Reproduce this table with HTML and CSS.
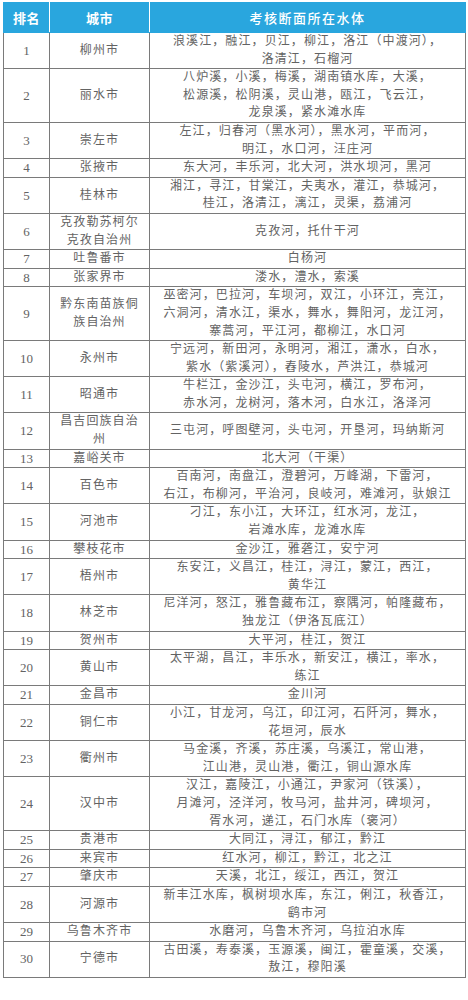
FILE: index.html
```html
<!DOCTYPE html>
<html lang="zh-CN">
<head>
<meta charset="utf-8">
<title>考核断面所在水体</title>
<link rel="stylesheet" href="styles.css">
</head>
<body>
<div class="page">
<table class="rank">
<colgroup><col class="c-rank"><col class="c-city"><col class="c-water"></colgroup>
<thead>
<tr><th>排名</th><th>城市</th><th class="wide">考核断面所在水体</th></tr>
</thead>
<tbody>
<tr><td class="n">1</td><td>柳州市</td><td>浪溪江，融江，贝江，柳江，洛江（中渡河），<br>洛清江，石榴河</td></tr>
<tr><td class="n">2</td><td>丽水市</td><td>八炉溪，小溪，梅溪，湖南镇水库，大溪，<br>松源溪，松阴溪，灵山港，瓯江，飞云江，<br>龙泉溪，紧水滩水库</td></tr>
<tr><td class="n">3</td><td>崇左市</td><td>左江，归春河（黑水河），黑水河，平而河，<br>明江，水口河，汪庄河</td></tr>
<tr><td class="n">4</td><td>张掖市</td><td>东大河，丰乐河，北大河，洪水坝河，黑河</td></tr>
<tr><td class="n">5</td><td>桂林市</td><td>湘江，寻江，甘棠江，夫夷水，灌江，恭城河，<br>桂江，洛清江，漓江，灵渠，荔浦河</td></tr>
<tr><td class="n">6</td><td>克孜勒苏柯尔<br>克孜自治州</td><td>克孜河，托什干河</td></tr>
<tr><td class="n">7</td><td>吐鲁番市</td><td>白杨河</td></tr>
<tr><td class="n">8</td><td>张家界市</td><td>溇水，澧水，索溪</td></tr>
<tr><td class="n">9</td><td>黔东南苗族侗<br>族自治州</td><td>巫密河，巴拉河，车坝河，双江，小环江，亮江，<br>六洞河，清水江，渠水，舞水，舞阳河，龙江河，<br>寨蒿河，平江河，都柳江，水口河</td></tr>
<tr><td class="n">10</td><td>永州市</td><td>宁远河，新田河，永明河，湘江，潇水，白水，<br>紫水（紫溪河），舂陵水，芦洪江，恭城河</td></tr>
<tr><td class="n">11</td><td>昭通市</td><td>牛栏江，金沙江，头屯河，横江，罗布河，<br>赤水河，龙树河，落木河，白水江，洛泽河</td></tr>
<tr><td class="n">12</td><td>昌吉回族自治<br>州</td><td>三屯河，呼图壁河，头屯河，开垦河，玛纳斯河</td></tr>
<tr><td class="n">13</td><td>嘉峪关市</td><td>北大河（干渠）</td></tr>
<tr><td class="n">14</td><td>百色市</td><td>百南河，南盘江，澄碧河，万峰湖，下雷河，<br>右江，布柳河，平治河，良岐河，难滩河，驮娘江</td></tr>
<tr><td class="n">15</td><td>河池市</td><td>刁江，东小江，大环江，红水河，龙江，<br>岩滩水库，龙滩水库</td></tr>
<tr><td class="n">16</td><td>攀枝花市</td><td>金沙江，雅砻江，安宁河</td></tr>
<tr><td class="n">17</td><td>梧州市</td><td>东安江，义昌江，桂江，浔江，蒙江，西江，<br>黄华江</td></tr>
<tr><td class="n">18</td><td>林芝市</td><td>尼洋河，怒江，雅鲁藏布江，察隅河，帕隆藏布，<br>独龙江（伊洛瓦底江）</td></tr>
<tr><td class="n">19</td><td>贺州市</td><td>大平河，桂江，贺江</td></tr>
<tr><td class="n">20</td><td>黄山市</td><td>太平湖，昌江，丰乐水，新安江，横江，率水，<br>练江</td></tr>
<tr><td class="n">21</td><td>金昌市</td><td>金川河</td></tr>
<tr><td class="n">22</td><td>铜仁市</td><td>小江，甘龙河，乌江，印江河，石阡河，舞水，<br>花垣河，辰水</td></tr>
<tr><td class="n">23</td><td>衢州市</td><td>马金溪，齐溪，苏庄溪，乌溪江，常山港，<br>江山港，灵山港，衢江，铜山源水库</td></tr>
<tr><td class="n">24</td><td>汉中市</td><td>汉江，嘉陵江，小通江，尹家河（铁溪），<br>月滩河，泾洋河，牧马河，盐井河，碑坝河，<br>胥水河，递江，石门水库（褒河）</td></tr>
<tr><td class="n">25</td><td>贵港市</td><td>大同江，浔江，郁江，黔江</td></tr>
<tr><td class="n">26</td><td>来宾市</td><td>红水河，柳江，黔江，北之江</td></tr>
<tr><td class="n">27</td><td>肇庆市</td><td>天溪，北江，绥江，西江，贺江</td></tr>
<tr><td class="n">28</td><td>河源市</td><td>新丰江水库，枫树坝水库，东江，俐江，秋香江，<br>鹞市河</td></tr>
<tr><td class="n">29</td><td>乌鲁木齐市</td><td>水磨河，乌鲁木齐河，乌拉泊水库</td></tr>
<tr><td class="n">30</td><td>宁德市</td><td>古田溪，寿泰溪，玉源溪，闽江，霍童溪，交溪，<br>敖江，穆阳溪</td></tr>
</tbody>
</table>
</div>
</body>
</html>
```
FILE: styles.css
```css
html, body {
  margin: 0;
  padding: 0;
  background: #ffffff;
}

.page {
  padding: 2px 3px 0 3px;
}

.rank {
  width: 462px;
  border-collapse: collapse;
  table-layout: fixed;
  font-family: "Liberation Serif", "Noto Sans CJK SC", serif;
  font-size: 12px;
  letter-spacing: 1.1px;
  color: #636363;
  border: 1px solid #555555;
}

.c-rank { width: 46px; }
.c-city { width: 100px; }
.c-water { width: 316px; }

.rank th {
  background: #29a6de;
  color: #ffffff;
  font-family: "Noto Sans CJK SC", sans-serif;
  font-weight: 700;
  font-size: 13px;
  letter-spacing: 0.5px;
  height: 29px;
  padding: 0;
  border: 1px solid #29a6de;
  border-right-color: #ffffff;
  text-align: center;
  vertical-align: middle;
}

.rank th.wide {
  border-right-color: #29a6de;
  letter-spacing: 1.5px;
  font-weight: 500;
}

.rank td {
  border: 1px solid #7a7a7a;
  padding: 0;
  line-height: 17.6px;
  text-align: center;
  vertical-align: middle;
  white-space: nowrap;
}

.rank td.n {
  font-size: 13px;
  letter-spacing: 0;
}
```
